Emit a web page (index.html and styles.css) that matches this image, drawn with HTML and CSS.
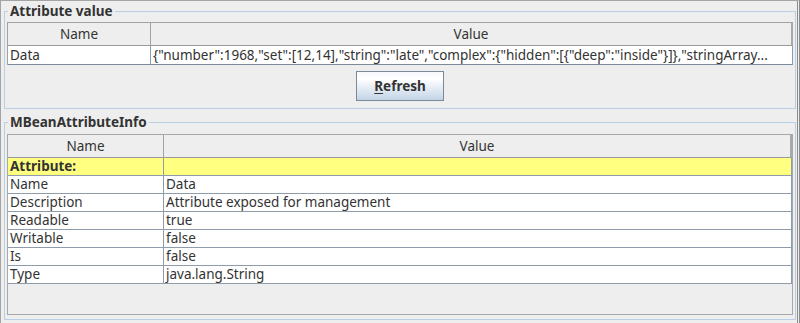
FILE: index.html
```html
<!DOCTYPE html>
<html lang="en">
<head>
    <meta charset="UTF-8">
    <title>Attribute value</title>
    <link rel="stylesheet" href="styles.css">
</head>
<body>
    <div class="window">
        <!-- current value of the selected attribute -->
        <fieldset class="group value-group">
            <legend>Attribute value</legend>
            <table class="grid value-table">
                <colgroup>
                    <col class="name-col">
                    <col>
                </colgroup>
                <thead>
                    <tr><th>Name</th><th>Value</th></tr>
                </thead>
                <tbody>
                    <tr>
                        <td>Data</td>
                        <td class="clip">{"number":1968,"set":[12,14],"string":"late","complex":{"hidden":[{"deep":"inside"}]},"stringArray...</td>
                    </tr>
                </tbody>
            </table>
            <div class="actions">
                <button class="refresh"><u>R</u>efresh</button>
            </div>
        </fieldset>

        <!-- attribute meta data -->
        <fieldset class="group info-group">
            <legend>MBeanAttributeInfo</legend>
            <div class="scroll">
                <table class="grid info-table">
                    <colgroup>
                        <col class="name-col">
                        <col>
                    </colgroup>
                    <thead>
                        <tr><th>Name</th><th>Value</th></tr>
                    </thead>
                    <tbody>
                        <tr class="section"><td>Attribute:</td><td></td></tr>
                        <tr><td>Name</td><td>Data</td></tr>
                        <tr><td>Description</td><td>Attribute exposed for management</td></tr>
                        <tr><td>Readable</td><td>true</td></tr>
                        <tr><td>Writable</td><td>false</td></tr>
                        <tr><td>Is</td><td>false</td></tr>
                        <tr><td>Type</td><td>java.lang.String</td></tr>
                    </tbody>
                </table>
            </div>
        </fieldset>
    </div>
</body>
</html>
```

FILE: styles.css
```css
html, body {
    margin: 0;
    background-color: #eeeeee;
}
body {
    font-family: 'Noto Sans', sans-serif;
    font-size: 13.5px;
    color: #333333;
}
.window {
    box-sizing: border-box;
    width: 800px;
    height: 323px;
    border-top: 1px solid #a4a4a4;
    border-left: 1px solid #a4a4a4;
    border-right: 3px double #8c8c8c;
    padding: 1px 1px 0 3px;
    display: flex;
    flex-direction: column;
}
.group {
    margin: 0;
    min-width: 0;
    border: 1px solid #b8cfe5;
    padding: 2px 2px 7px 2px;
}
.group legend {
    font-weight: bold;
    line-height: 18px;
    padding: 0 2px;
    margin-left: 1px;
    color: #333333;
}
.info-group {
    margin-top: 4px;
    padding: 3px 2px 4px 2px;
}
.grid {
    width: 100%;
    table-layout: fixed;
    border-collapse: separate;
    border-spacing: 0;
    line-height: 17px;
}
.value-table {
    border-top: 1px solid #a2a2a2;
    border-left: 1px solid #a2a2a2;
}
.value-table .name-col {
    width: 143px;
}
.info-table .name-col {
    width: 156px;
}
.grid th {
    box-sizing: border-box;
    height: 23px;
    font-weight: normal;
    text-align: center;
    background-color: #eeeeee;
    border-right: 1px solid #a2a2a2;
    border-bottom: 1px solid #999999;
    padding: 0;
}
.grid th:last-child {
    border-right: 2px solid #a8a8a8;
}
.grid td {
    box-sizing: border-box;
    height: 18px;
    background-color: #ffffff;
    border-right: 1px solid #8f9cab;
    border-bottom: 1px solid #8f9cab;
    padding: 0 0 0 2px;
    white-space: nowrap;
    overflow: hidden;
}
.value-table td {
    height: 19px;
    border-bottom-color: #7a8a99;
}
.info-table td {
    height: 17.5px;
}
.clip {
    text-overflow: clip;
}
.section td {
    background-color: #ffff80;
    font-weight: bold;
}
.actions {
    display: flex;
    justify-content: center;
    margin-top: 6px;
}
.refresh {
    width: 88px;
    height: 30px;
    font-family: 'Noto Sans', sans-serif;
    font-size: 13.5px;
    font-weight: bold;
    color: #333333;
    border: 1px solid #7a8a99;
    border-radius: 0;
    background: linear-gradient(to bottom, #f6f9fc 0%, #ffffff 25%, #e2ebf4 60%, #c3d4e6 100%);
    padding: 0;
}
.refresh u {
    text-underline-offset: 2px;
}
.scroll {
    box-sizing: border-box;
    height: 181px;
    border: 1px solid #a8a8a8;
    background-color: #eeeeee;
}
```
